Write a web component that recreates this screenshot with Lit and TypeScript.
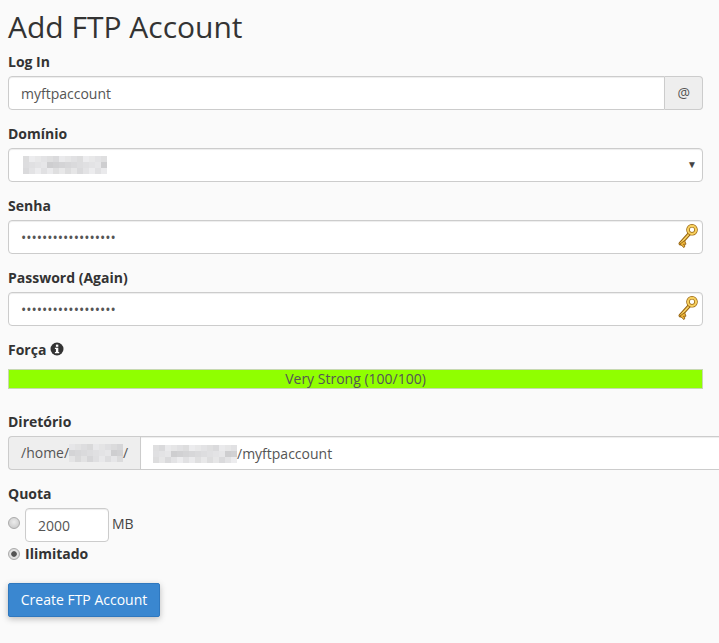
import { LitElement, html, css, svg } from 'lit'
import { customElement, property } from 'lit/decorators.js';

// pixelated smudge standing in for the redacted host names
@customElement('blur-text')
export class BlurText extends LitElement {
  @property({ type: Number }) cells = 14;
  @property({ type: Number }) seed = 3;

  static override styles = css`
    :host { display: inline-flex; vertical-align: middle; }
    svg { display: block; }
  `;

  override render() {
    const size = 6;
    const rows = 3;
    const rects = [];
    for (let x = 0; x < this.cells; x++) {
      for (let y = 0; y < rows; y++) {
        const n = (x * 7 + y * 13 + this.seed * 5 + x * y * 3) % 9;
        const grey = 206 + n * 3;
        const fade = y === 1 ? 1 : 0.75;
        rects.push(svg`<rect x=${x * size} y=${y * size} width=${size} height=${size} fill=${`rgb(${grey},${grey},${grey + 2})`} opacity=${fade}></rect>`);
      }
    }
    return html`<svg width=${this.cells * size} height=${rows * size}>${rects}</svg>`;
  }
}

@customElement('app-root')
export class AppRoot extends LitElement {
  static override styles = css`
    :host {
      display: block;
      height: 643px;
      overflow: hidden;
      background: #fafafa;
      font-family: 'Open Sans', sans-serif;
      font-size: 14px;
      line-height: 20px;
      color: #333;
    }

    .page {
      padding: 0 16px 0 8px;
      width: 719px;
      box-sizing: border-box;
    }

    h1 {
      margin: 0;
      padding-top: 8px;
      height: 54px;
      box-sizing: border-box;
      font-size: 30px;
      font-weight: 400;
      line-height: 38px;
      color: #333;
    }

    .group { margin-bottom: 16px; }

    label, .label {
      display: block;
      height: 19px;
      margin-bottom: 3px;
      font-weight: 700;
      line-height: 16px;
      color: #333;
    }

    .control {
      display: block;
      width: 100%;
      height: 34px;
      box-sizing: border-box;
      padding: 6px 12px;
      border: 1px solid #ccc;
      border-radius: 4px;
      background: #fff;
      font: inherit;
      line-height: 20px;
      color: #555;
      outline: none;
      box-shadow: inset 0 1px 1px rgba(0, 0, 0, 0.075);
    }

    .input-group { display: flex; }
    .input-group .control { flex: 1; min-width: 0; }
    .addon {
      display: flex;
      align-items: center;
      padding: 0 12px;
      height: 34px;
      box-sizing: border-box;
      border: 1px solid #ccc;
      background: #eee;
      color: #555;
      white-space: nowrap;
    }
    .addon.end {
      border-left: 0;
      border-radius: 0 4px 4px 0;
    }
    .addon.start {
      border-right: 0;
      border-radius: 4px 0 0 4px;
    }
    .joined-left { border-radius: 4px 0 0 4px; }

    .select {
      display: flex;
      align-items: center;
      justify-content: space-between;
      padding: 6px 5px 6px 14px;
    }
    .arrow { font-size: 10px; color: #444; line-height: 1; margin-top: -3px; }

    .password { position: relative; }
    .password .key {
      position: absolute;
      right: 4px;
      top: 4px;
    }

    .meter-group { margin-bottom: 25px; }
    .force { display: flex; align-items: flex-start; gap: 4px; height: 27px; margin-bottom: 0; }
    .force svg { margin-top: 0; }
    .meter {
      height: 20px;
      box-sizing: border-box;
      border: 1px solid #c6d8b0;
      background: #90ff00;
      text-align: center;
      line-height: 18px;
      color: #555;
    }

    .dir {
      display: flex;
      width: 760px;
    }
    .dir .addon { width: 132px; flex: none; padding-left: 12px; }
    .dir .control {
      flex: 1;
      display: flex;
      align-items: center;
      padding: 7px 12px 5px;
      border-radius: 0;
    }

    .radio-row { display: flex; align-items: center; }
    .radio {
      appearance: none;
      flex: none;
      width: 12px;
      height: 12px;
      margin: 0 5px 0 0;
      border: 1px solid #aaa;
      border-radius: 50%;
      background: radial-gradient(circle at 50% 40%, #ececec, #c4c4c4);
    }
    .radio:checked {
      background: radial-gradient(circle, #555 0 2.4px, #e6e6e6 3.2px, #cfcfcf);
    }
    .quota-input { width: 84px; margin-right: 3px; }
    .quota .first { height: 34px; margin-bottom: 2px; }
    .quota .first .radio { margin-top: -5px; }
    .quota .first .unit { margin-top: -2px; color: #444; }
    .quota strong { font-weight: 700; }

    button {
      display: block;
      margin-top: 19px;
      width: 152px;
      height: 34px;
      padding: 0;
      border: 1px solid #2f78bf;
      border-radius: 2px;
      background: #3a87d0;
      color: #fff;
      font: inherit;
      box-shadow: 0 2px 6px rgba(0, 0, 0, 0.25);
    }
  `;

  private _key() {
    return html`<svg class="key" width="21" height="25" viewBox="0 0 21 25">
      <path d="M11.5 9.5 L2.5 19.5" stroke="#96620f" stroke-width="3.8" stroke-linecap="round"></path>
      <path d="M11.5 9.5 L2.5 19.5" stroke="#f7d264" stroke-width="1.8" stroke-linecap="round"></path>
      <path d="M2 20 L6 23.6 L7 21.8 L5.4 20.4 L8 20.2 L6.6 16.6 Z" fill="#ecb53a" stroke="#96620f" stroke-width="0.9"></path>
      <circle cx="14" cy="5.8" r="4" fill="none" stroke="#96620f" stroke-width="3.6"></circle>
      <circle cx="14" cy="5.8" r="4" fill="none" stroke="#f6cf5e" stroke-width="2.2"></circle>
    </svg>`;
  }

  override render() {
    return html`
      <div class="page">
        <h1>Add FTP Account</h1>

        <div class="group">
          <label>Log In</label>
          <div class="input-group">
            <input class="control joined-left" value="myftpaccount" />
            <span class="addon end">@</span>
          </div>
        </div>

        <div class="group">
          <label>Domínio</label>
          <div class="control select">
            <blur-text cells="14" seed="2"></blur-text>
            <span class="arrow">▼</span>
          </div>
        </div>

        <div class="group">
          <label>Senha</label>
          <div class="password">
            <input class="control" type="password" value="abcdefghijklmnopqr" />
            ${this._key()}
          </div>
        </div>

        <div class="group">
          <label>Password (Again)</label>
          <div class="password">
            <input class="control" type="password" value="abcdefghijklmnopqr" />
            ${this._key()}
          </div>
        </div>

        <div class="meter-group">
          <div class="label force">
            Força
            <svg width="14" height="14" viewBox="0 0 14 14">
              <circle cx="7" cy="7" r="6.5" fill="#333"></circle>
              <rect x="5.9" y="2.6" width="2.4" height="2.2" fill="#fff"></rect>
              <path d="M4.9 5.8 H8.3 V10 H9.2 V11.3 H4.9 V10 H5.9 V7.1 H4.9 Z" fill="#fff"></path>
            </svg>
          </div>
          <div class="meter">Very Strong (100/100)</div>
        </div>

        <div class="group">
          <label>Diretório</label>
          <div class="dir">
            <span class="addon start">/home/<blur-text cells="9" seed="5"></blur-text>/</span>
            <div class="control">
              <blur-text cells="14" seed="4"></blur-text>/myftpaccount
            </div>
          </div>
        </div>

        <div class="quota">
          <label>Quota</label>
          <div class="radio-row first">
            <input class="radio" type="radio" name="quota" />
            <input class="control quota-input" value="2000" />
            <span class="unit">MB</span>
          </div>
          <div class="radio-row">
            <input class="radio" type="radio" name="quota" checked />
            <strong>Ilimitado</strong>
          </div>
        </div>

        <button>Create FTP Account</button>
      </div>
    `;
  }
}
